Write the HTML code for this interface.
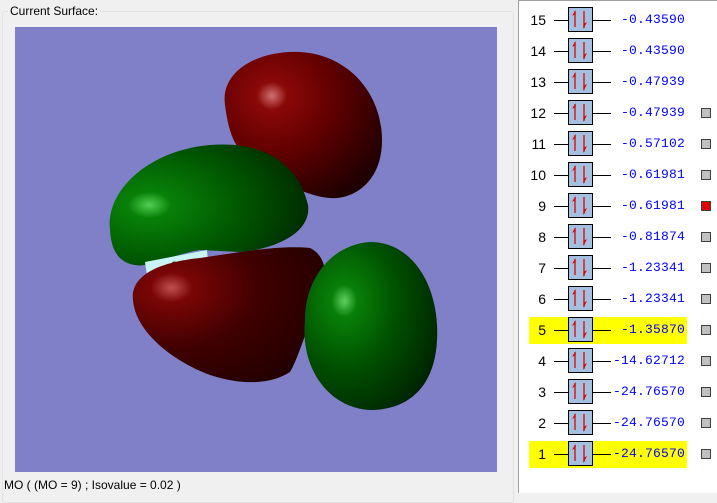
<!DOCTYPE html>
<html><head><meta charset="utf-8"><style>
html,body{margin:0;padding:0;width:717px;height:492px;overflow:hidden;background:#f0f0f0;font-family:"Liberation Sans",sans-serif;}
.gb{position:absolute;left:2px;top:11px;width:510px;height:490px;border:1px solid #e2e2e2;border-radius:3px;}
.lbl{position:absolute;left:8px;top:4px;background:#f0f0f0;padding:0 2px;font-size:12px;color:#000;}
.view{position:absolute;left:15px;top:27px;width:482px;height:445px;background:#8080c8;}
.status{position:absolute;left:4px;top:478px;font-size:12px;color:#000;}
.rp{position:absolute;left:518px;top:0;width:199px;height:492px;background:#fff;border-left:1px solid #a0a0a0;border-top:1px solid #a0a0a0;}
.row{position:absolute;left:0;width:199px;height:27px;}
.hl{position:absolute;left:10px;top:0;width:158px;height:27px;background:#ffff00;}
.num{position:absolute;right:172px;top:5px;color:#000;font-size:14px;font-family:"Liberation Sans",sans-serif;}
.ln{position:absolute;top:13px;height:1px;background:#000;}
.box{position:absolute;left:49px;top:0;width:23px;height:23px;background:#a4c0e0;border:1px solid #000;}
.val{position:absolute;right:33px;top:5px;color:#0000ff;font-family:"Liberation Mono",monospace;font-size:13px;letter-spacing:0.2px;}
.cb{position:absolute;left:182px;top:8px;width:8px;height:8px;background:#c0c0c0;border:1px solid #404040;}
</style></head><body>
<div class="gb"></div>
<div class="lbl">Current Surface:</div>
<div class="view"></div>
<svg style="position:absolute;left:0;top:0" width="517" height="492">
<defs>
<radialGradient id="r1" cx="0.3" cy="0.3" r="0.8"><stop offset="0" stop-color="#d07070"/><stop offset="0.12" stop-color="#8a0808"/><stop offset="0.5" stop-color="#600000"/><stop offset="1" stop-color="#200000"/></radialGradient>
<radialGradient id="g1" cx="0.2" cy="0.5" r="0.9"><stop offset="0" stop-color="#50d050"/><stop offset="0.12" stop-color="#088008"/><stop offset="0.5" stop-color="#005800"/><stop offset="1" stop-color="#002000"/></radialGradient>
<radialGradient id="g2" cx="0.3" cy="0.35" r="0.8"><stop offset="0" stop-color="#60d060"/><stop offset="0.12" stop-color="#088008"/><stop offset="0.5" stop-color="#005000"/><stop offset="1" stop-color="#002000"/></radialGradient>
<radialGradient id="r2" cx="0.2" cy="0.3" r="0.9"><stop offset="0" stop-color="#c05050"/><stop offset="0.12" stop-color="#7a0606"/><stop offset="0.5" stop-color="#400000"/><stop offset="1" stop-color="#200000"/></radialGradient>
</defs>
<line x1="248" y1="147" x2="297" y2="186" stroke="#d0ffff" stroke-width="4"/>
<path d="M225,105 C220,70 260,50 300,52 C350,55 382,95 382,140 C382,185 350,200 330,198 C300,196 260,170 240,150 C230,138 227,120 225,105 Z" fill="url(#r1)"/>
<path d="M110,230 C105,190 150,150 210,145 C270,140 300,170 308,205 C312,235 270,250 240,252 L200,250 C170,255 150,268 135,265 C115,262 111,245 110,230 Z" fill="url(#g1)"/>
<path d="M145,262 L207,250 L208,262 L147,276 Z" fill="#c8f4f4"/>
<text x="171" y="270" font-size="12" fill="#203030">2</text>
<path d="M228,258 Q248,248 272,252 L240,260 Z" fill="#1010e0"/>
<path d="M133,300 C130,275 160,262 200,258 C240,252 280,245 310,248 C325,255 330,275 320,300 C305,330 300,355 290,372 C270,385 240,385 210,375 C170,360 135,330 133,300 Z" fill="url(#r2)"/>
<path d="M305,320 C305,280 330,245 370,242 C415,242 440,290 437,340 C435,385 410,410 370,410 C330,408 300,370 305,320 Z" fill="url(#g2)"/>
</svg>
<div class="status">MO ( (MO = 9) ; Isovalue = 0.02 )</div>
<div class="rp">
<div class="row" style="top:6px"><span class="num">15</span><div class="ln" style="left:35px;width:14px"></div><div class="box"></div><div class="ln" style="left:74px;width:18px"></div><span class="val">-0.43590</span></div>
<div class="row" style="top:37px"><span class="num">14</span><div class="ln" style="left:35px;width:14px"></div><div class="box"></div><div class="ln" style="left:74px;width:18px"></div><span class="val">-0.43590</span></div>
<div class="row" style="top:68px"><span class="num">13</span><div class="ln" style="left:35px;width:14px"></div><div class="box"></div><div class="ln" style="left:74px;width:18px"></div><span class="val">-0.47939</span></div>
<div class="row" style="top:99px"><span class="num">12</span><div class="ln" style="left:35px;width:14px"></div><div class="box"></div><div class="ln" style="left:74px;width:18px"></div><span class="val">-0.47939</span><div class="cb"></div></div>
<div class="row" style="top:130px"><span class="num">11</span><div class="ln" style="left:35px;width:14px"></div><div class="box"></div><div class="ln" style="left:74px;width:18px"></div><span class="val">-0.57102</span><div class="cb"></div></div>
<div class="row" style="top:161px"><span class="num">10</span><div class="ln" style="left:35px;width:14px"></div><div class="box"></div><div class="ln" style="left:74px;width:18px"></div><span class="val">-0.61981</span><div class="cb"></div></div>
<div class="row" style="top:192px"><span class="num">9</span><div class="ln" style="left:35px;width:14px"></div><div class="box"></div><div class="ln" style="left:74px;width:18px"></div><span class="val">-0.61981</span><div class="cb" style="background:#e00000"></div></div>
<div class="row" style="top:223px"><span class="num">8</span><div class="ln" style="left:35px;width:14px"></div><div class="box"></div><div class="ln" style="left:74px;width:18px"></div><span class="val">-0.81874</span><div class="cb"></div></div>
<div class="row" style="top:254px"><span class="num">7</span><div class="ln" style="left:35px;width:14px"></div><div class="box"></div><div class="ln" style="left:74px;width:18px"></div><span class="val">-1.23341</span><div class="cb"></div></div>
<div class="row" style="top:285px"><span class="num">6</span><div class="ln" style="left:35px;width:14px"></div><div class="box"></div><div class="ln" style="left:74px;width:18px"></div><span class="val">-1.23341</span><div class="cb"></div></div>
<div class="row" style="top:316px"><div class="hl"></div><span class="num">5</span><div class="ln" style="left:35px;width:14px"></div><div class="box"></div><div class="ln" style="left:74px;width:18px"></div><span class="val">-1.35870</span><div class="cb"></div></div>
<div class="row" style="top:347px"><span class="num">4</span><div class="ln" style="left:35px;width:14px"></div><div class="box"></div><div class="ln" style="left:74px;width:18px"></div><span class="val">-14.62712</span><div class="cb"></div></div>
<div class="row" style="top:378px"><span class="num">3</span><div class="ln" style="left:35px;width:14px"></div><div class="box"></div><div class="ln" style="left:74px;width:18px"></div><span class="val">-24.76570</span><div class="cb"></div></div>
<div class="row" style="top:409px"><span class="num">2</span><div class="ln" style="left:35px;width:14px"></div><div class="box"></div><div class="ln" style="left:74px;width:18px"></div><span class="val">-24.76570</span><div class="cb"></div></div>
<div class="row" style="top:440px"><div class="hl"></div><span class="num">1</span><div class="ln" style="left:35px;width:14px"></div><div class="box"></div><div class="ln" style="left:74px;width:18px"></div><span class="val">-24.76570</span><div class="cb"></div></div>
</div>
<svg style="position:absolute;left:0;top:0;pointer-events:none" width="717" height="492">
<defs><g id="ar"><path d="M0,4 L0,20" stroke="#e00000" stroke-width="1.3"/><path d="M0.6,3 L-3,9 L0.6,7 Z" fill="#e00000"/><path d="M9,4 L9,21" stroke="#e00000" stroke-width="1.3"/><path d="M8.4,22 L12,15 L8.4,17 Z" fill="#e00000"/></g></defs>
<use href="#ar" x="575" y="7"/><use href="#ar" x="575" y="38"/><use href="#ar" x="575" y="69"/><use href="#ar" x="575" y="100"/><use href="#ar" x="575" y="131"/><use href="#ar" x="575" y="162"/><use href="#ar" x="575" y="193"/><use href="#ar" x="575" y="224"/><use href="#ar" x="575" y="255"/><use href="#ar" x="575" y="286"/><use href="#ar" x="575" y="317"/><use href="#ar" x="575" y="348"/><use href="#ar" x="575" y="379"/><use href="#ar" x="575" y="410"/><use href="#ar" x="575" y="441"/>
</svg>
</body></html>
